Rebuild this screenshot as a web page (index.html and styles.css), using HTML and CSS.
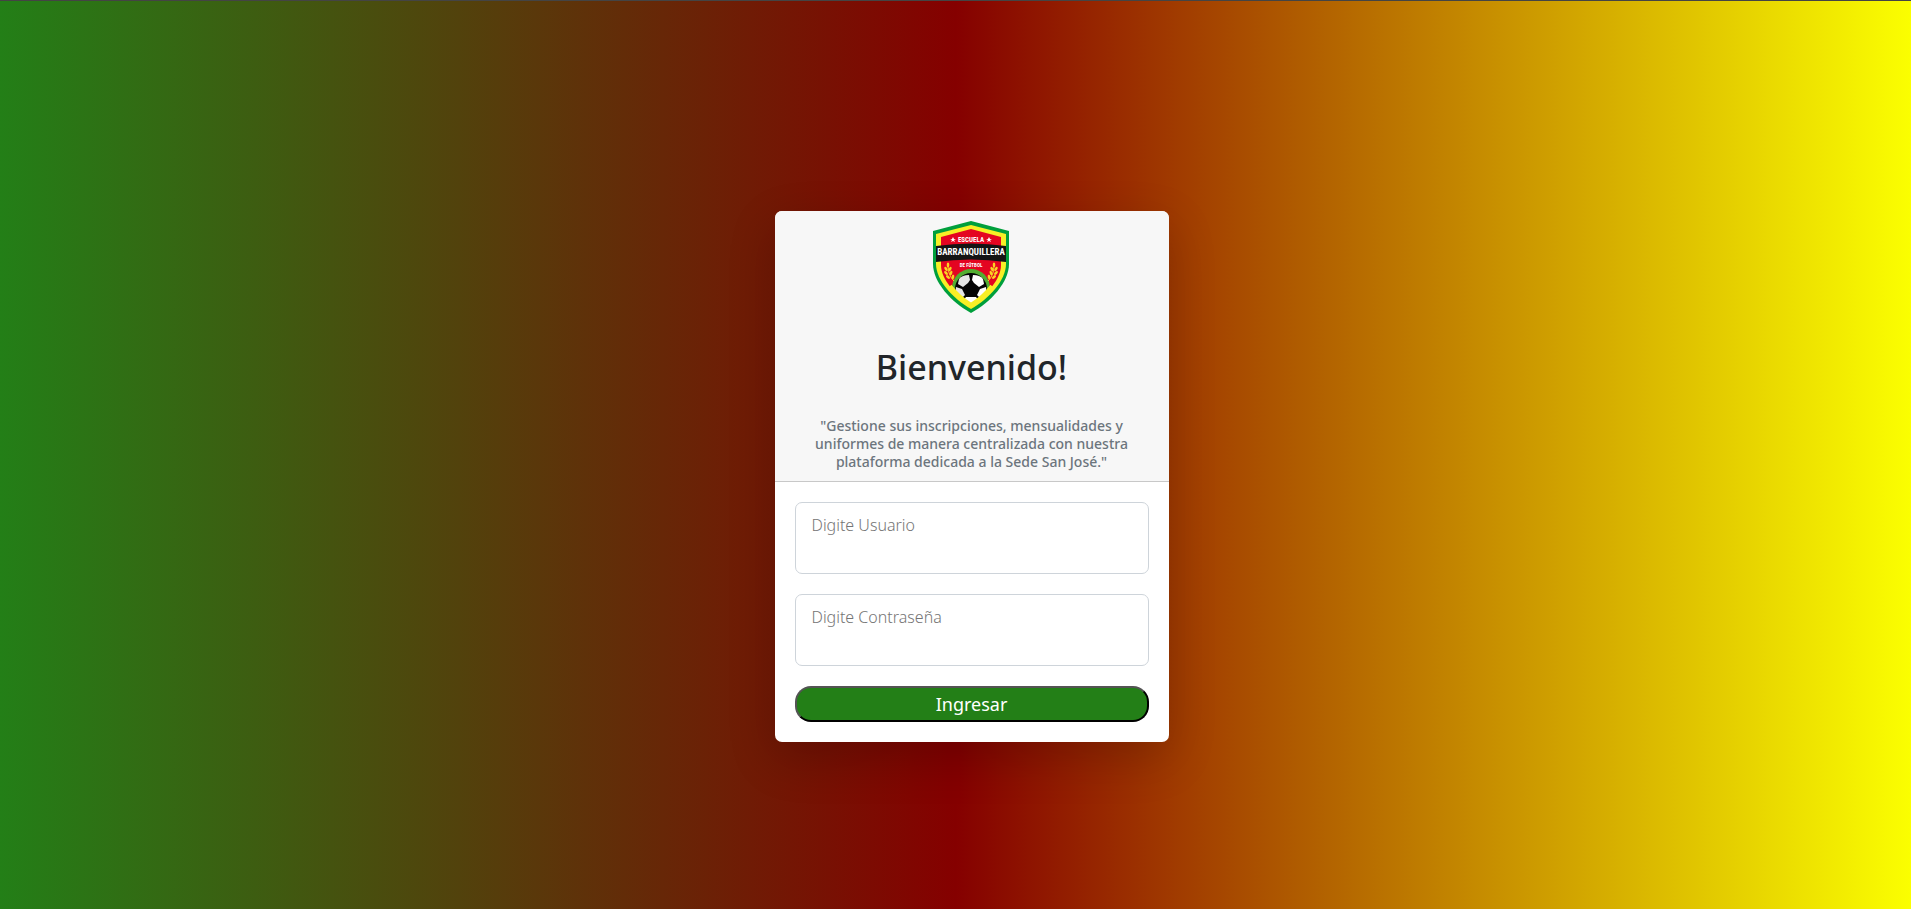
FILE: index.html
```html
<!DOCTYPE html>
<html lang="es">
<head>
    <meta charset="UTF-8">
    <meta name="viewport" content="width=device-width, initial-scale=1.0">
    <title>Iniciar sesión</title>
    <link rel="stylesheet" href="styles.css">
</head>
<body>
    <main class="login">
        <div class="card">
            <div class="card-header">
                <svg class="logo" viewBox="0 0 78 92" role="img" aria-label="Escuela Barranquillera de Fútbol">
                    <defs>
                        <clipPath id="inner">
                            <path d="M38 8L68 16V44C68 58 54 74 38 84C22 74 8 58 8 44V16Z"/>
                        </clipPath>
                        <g id="laurel" fill="#f9d423">
                            <ellipse cx="15" cy="44" rx="1.3" ry="2.4"/>
                            <ellipse cx="13" cy="48" rx="1.3" ry="2.4" transform="rotate(-35 13 48)"/>
                            <ellipse cx="17" cy="48" rx="1.3" ry="2.4" transform="rotate(30 17 48)"/>
                            <ellipse cx="13" cy="52" rx="1.3" ry="2.4" transform="rotate(-45 13 52)"/>
                            <ellipse cx="18" cy="52" rx="1.3" ry="2.4" transform="rotate(20 18 52)"/>
                            <ellipse cx="15" cy="56" rx="1.3" ry="2.4" transform="rotate(-50 15 56)"/>
                            <ellipse cx="20" cy="56" rx="1.3" ry="2.4" transform="rotate(10 20 56)"/>
                            <path fill="none" stroke="#f9d423" d="M15 45Q15 54 21 60"/>
                        </g>
                    </defs>
                    <!-- Shield -->
                    <path fill="#009f3c" d="M38 0L76 10V43C76 61 58 81 38 92C18 81 0 61 0 43V10Z"/>
                    <path fill="#f8ef26" d="M38 4L73 13V43C73 59 56 78 38 88C20 78 3 59 3 43V13Z"/>
                    <path fill="#e40521" d="M38 8L68 16V44C68 58 54 74 38 84C22 74 8 58 8 44V16Z"/>
                    <!-- Ball -->
                    <g clip-path="url(#inner)">
                        <circle cx="38" cy="67" r="19" fill="#52ae32"/>
                        <circle cx="38" cy="68" r="16" fill="#050505"/>
                        <path fill="#e6e6e6" d="M26 58Q29 54 36 54L37 59L35 62L30 66L25 63Z"/>
                        <path fill="#fff" d="M40 54Q47 54 50 58L51 63L46 66L41 62L39 59Z"/>
                        <path fill="#e6e6e6" d="M23 66L29 68L32 74L28 78L22 74Z"/>
                        <path fill="#fff" d="M53 66L47 68L44 74L48 78L54 74ZM33 76H43L46 80L38 88L30 80Z"/>
                    </g>
                    <path fill="none" stroke="#f8ef26" stroke-width="4" d="M17 65C23 73 30 79 38 84C46 79 53 73 59 65"/>
                    <!-- Laurels -->
                    <use href="#laurel"/>
                    <use href="#laurel" transform="translate(76 0) scale(-1 1)"/>
                    <!-- Banner -->
                    <path fill="#141414" d="M3 25Q38 20 73 25V41Q38 36 3 41Z"/>
                    <path fill="#fff" d="M20 16L21 18L23 18L21 19L22 21L20 20L18 21L19 19L17 18L19 18ZM56 16L57 18L59 18L57 19L58 21L56 20L54 21L55 19L53 18L55 18Z"/>
                    <text class="logo-small" x="38" y="21">ESCUELA</text>
                    <text class="logo-name" x="38" y="34">BARRANQUILLERA</text>
                    <text class="logo-tiny" x="38" y="46">DE FÚTBOL</text>
                </svg>
                <h1>Bienvenido!</h1>
                <h2>"Gestione sus inscripciones, mensualidades y uniformes de manera centralizada con nuestra plataforma dedicada a la Sede San José."</h2>
            </div>
            <form class="card-body">
                <input type="text" id="usuario" placeholder="Digite Usuario" aria-label="Usuario" required>
                <input type="password" id="contrasena" placeholder="Digite Contraseña" aria-label="Contraseña" required>
                <button type="submit">Ingresar</button>
            </form>
        </div>
    </main>
</body>
</html>
```
FILE: styles.css
```css
* {
    box-sizing: border-box;
}
body {
    margin: 0;
    min-height: 100vh;
    display: flex;
    border-top: 1px solid #444;
    font-family: "Noto Sans", "Open Sans", sans-serif;
    color: #212529;
    background: linear-gradient(90deg, #237f17, #850000, #fbff00);
}
.login {
    flex: 1;
    display: flex;
    justify-content: center;
    align-items: center;
    padding: 43px 0 0 32px;
}
.card {
    width: 394px;
    max-width: 100%;
    background-color: #fff;
    border-radius: 7px;
    box-shadow: 0 16px 48px rgba(0, 0, 0, 0.2);
}
.card-header {
    padding: 10px 32px;
    text-align: center;
    background-color: #f7f7f7;
    border-bottom: 1px solid #c8c8c8;
    border-radius: 7px 7px 0 0;
}
.logo {
    display: block;
    width: 78px;
    height: 92px;
    margin: 0 auto;
}
.logo text {
    fill: #fff;
    font-family: "Roboto Condensed", Roboto, sans-serif;
    font-weight: 700;
    text-anchor: middle;
}
.logo .logo-small {
    font-size: 7px;
}
.logo .logo-name {
    font-size: 9px;
}
.logo .logo-tiny {
    font-size: 5px;
}
h1 {
    margin: 32px 0 28px;
    font-size: 34px;
    font-weight: 500;
    line-height: 44px;
}
h2 {
    margin: 0;
    font-size: 14px;
    font-weight: 500;
    line-height: 18px;
    color: #6c757d;
}
.card-body {
    display: flex;
    flex-direction: column;
    gap: 20px;
    padding: 20px;
}
input {
    width: 100%;
    height: 72px;
    padding: 8px 16px 34px;
    font: 300 16px "Noto Sans", "Open Sans", sans-serif;
    color: #212529;
    background-color: #fff;
    border: 1px solid #ced4da;
    border-radius: 7px;
}
input::placeholder {
    color: #757575;
}
button {
    height: 36px;
    padding: 0;
    font: 400 18px "Noto Sans", "Open Sans", sans-serif;
    color: #fff;
    background-color: #237f17;
    border: 2px outset #000;
    border-radius: 16px;
}
```
